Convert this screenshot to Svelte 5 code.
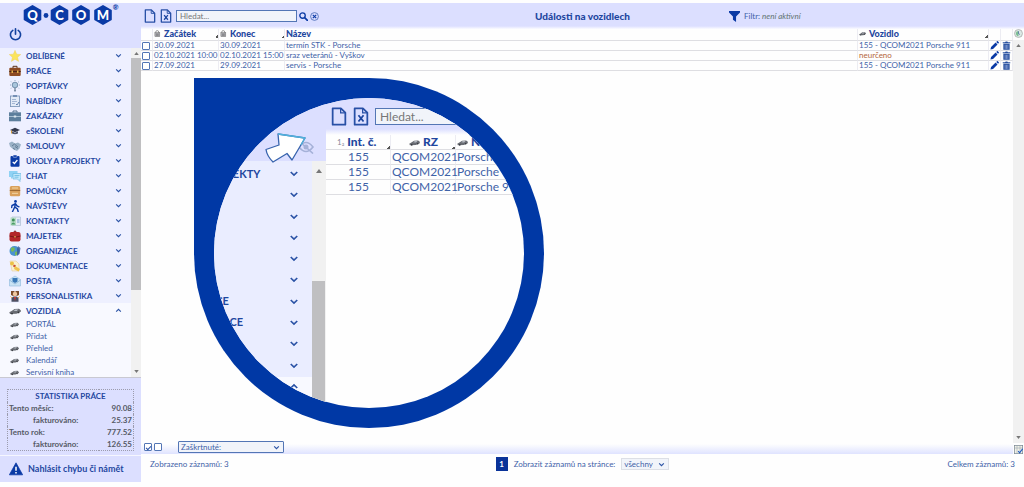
<script lang="ts">
	type Row = { from: string; to: string; name: string; vehicle: string | null };

	const menu = [
		{ icon: 'star', label: 'OBLÍBENÉ' },
		{ icon: 'briefcase', label: 'PRÁCE' },
		{ icon: 'bulb', label: 'POPTÁVKY' },
		{ icon: 'sheet', label: 'NABÍDKY' },
		{ icon: 'case', label: 'ZAKÁZKY' },
		{ icon: 'hat', label: 'eŠKOLENÍ' },
		{ icon: 'hands', label: 'SMLOUVY' },
		{ icon: 'tasks', label: 'ÚKOLY A PROJEKTY' },
		{ icon: 'chat', label: 'CHAT' },
		{ icon: 'box', label: 'POMŮCKY' },
		{ icon: 'walk', label: 'NÁVŠTĚVY' },
		{ icon: 'contact', label: 'KONTAKTY' },
		{ icon: 'bag', label: 'MAJETEK' },
		{ icon: 'globe', label: 'ORGANIZACE' },
		{ icon: 'docs', label: 'DOKUMENTACE' },
		{ icon: 'mail', label: 'POŠTA' },
		{ icon: 'person', label: 'PERSONALISTIKA' }
	];
	const submenu = ['PORTÁL', 'Přidat', 'Přehled', 'Kalendář', 'Servisní kniha'];

	const rows: Row[] = [
		{ from: '30.09.2021', to: '30.09.2021', name: 'termín STK - Porsche', vehicle: '155 - QCOM2021 Porsche 911' },
		{ from: '02.10.2021 10:00', to: '02.10.2021 15:00', name: 'sraz veteránů - Vyškov', vehicle: null },
		{ from: '27.09.2021', to: '29.09.2021', name: 'servis - Porsche', vehicle: '155 - QCOM2021 Porsche 911' }
	];

	const stats = [
		{ label: 'Tento měsíc:', value: '90.08', sub: false },
		{ label: 'fakturováno:', value: '25.37', sub: true },
		{ label: 'Tento rok:', value: '777.52', sub: false },
		{ label: 'fakturováno:', value: '126.55', sub: true }
	];

	// short labels end left of the glass, only their chevrons show
	const lensMenu = ['ÚKOLY A PROJEKTY', '', '', '', '', '', 'ORGANIZACE', 'DOKUMENTACE', '', ''];

	let search = $state('');
	let vehiclesOpen = $state(true);
</script>

{#snippet icon(name: string)}
	<svg class="icon" viewBox="0 0 12 12" aria-hidden="true">
		{#if name === 'star'}
			<path d="M6 .3 7.700 4.200l4.100.3-3.200 2.700 1 4.200L6 9.200l-3.600 2.200 1-4.200L.2 4.500l4.100-.3z" fill="#fbe45c" stroke="#eecb58" stroke-width=".4" />
		{:else if name === 'briefcase'}
			<path d="M4 3V1.300h4V3" fill="none" stroke="#5b3018" />
			<rect x=".3" y="2.800" width="11.400" height="8.200" rx="1" fill="#8c4a22" />
			<path d="M.3 6.500h11.400" stroke="#4b2713" />
			<rect x="2.500" y="5.500" width="1.500" height="2.500" fill="#e3b04c" />
			<rect x="8" y="5.500" width="1.500" height="2.500" fill="#e3b04c" />
		{:else if name === 'bulb'}
			<circle cx="6" cy="5" r="2.800" fill="#a9c6dc" stroke="#5f7f9d" stroke-width=".8" />
			<path d="M5 9h2M5 10.800h2" stroke="#4e6780" />
			<path d="M1 5h1M10 5h1M2 1.500l.8.8M10 1.500l-.8.8M2 8.500l.8-.8M10 8.500l-.8-.8M6 0v1" stroke="#7d9bb8" stroke-width=".8" />
		{:else if name === 'sheet'}
			<rect x="1.500" y="1" width="9" height="10.600" fill="#e3ebf7" stroke="#7590b5" stroke-width=".8" />
			<rect x="4" y="0" width="4" height="2" fill="#7590b5" />
			<path d="M3 4.500h4M3 6.500h5M3 8.500h3" stroke="#8aa1c4" stroke-width=".7" />
			<path d="m7 9 1 1 2-3" fill="none" stroke="#4a6ca0" stroke-width=".8" />
		{:else if name === 'case'}
			<path d="M4 2.500V1h4v1.500" fill="none" stroke="#54738e" />
			<rect x="0" y="2.300" width="12" height="9" fill="#5d7f9c" />
			<path d="M0 6.500h12" stroke="#c0d3df" stroke-width=".8" />
			<rect x="4.800" y="5.500" width="2.400" height="2" fill="#dbe7ee" />
		{:else if name === 'hat'}
			<path d="M1 5 6 2.800 11 5 6 7.300z" fill="#34394c" />
			<path d="M3 6.300v2.200q3 1.600 6 0V6.300L6 7.700z" fill="#505568" />
			<path d="M2.500 5.500v3" stroke="#d29b3e" />
		{:else if name === 'hands'}
			<path d="M0 3 3 1.500l3 2 3-1 3 2-1.500 4L8 11 4.500 9.500 1 6.500z" fill="#9ab1c6" />
			<path d="M3 6 5.500 4 9 7M4 8l2 1.500M6 6.500l3 2" fill="none" stroke="#55708a" stroke-width=".8" />
		{:else if name === 'tasks'}
			<rect x="1.500" y="1" width="9" height="10.700" rx="1" fill="#0a3aa5" />
			<rect x="4" y="0" width="4" height="2.300" rx=".8" fill="#0a3aa5" stroke="#eef1ff" stroke-width=".5" />
			<path d="m3.700 6.800 1.700 1.700 3-3.500" fill="none" stroke="#fff" stroke-width="1.200" />
		{:else if name === 'chat'}
			<path d="M0 1h8.500v6H4L2 9V7H0z" fill="#8fd2f4" />
			<path d="M4 3.500h8V9h-1v2.500L8.500 9H4z" fill="#c1e7fa" stroke="#5bb1dd" stroke-width=".6" />
			<path d="M5.500 5.500h5M5.500 7.200h4" stroke="#5bb1dd" stroke-width=".7" />
		{:else if name === 'box'}
			<rect x=".8" y="1" width="10.400" height="10.300" rx="1.500" fill="#d9a05b" />
			<path d="M.8 5.500h10.400" stroke="#9c6931" />
			<path d="M3 3h6M3 8.300h6" stroke="#f3d6a5" />
		{:else if name === 'walk'}
			<circle cx="6.500" cy="1.400" r="1.400" fill="#0a3aa5" />
			<path d="M6.300 3.500 5.700 7.500M5.700 7 3.500 11.700M5.900 7l2.500 2 .8 2.700M6 4 3 5.500 2.700 7.500M6.700 4l1.300 2 2 .8" fill="none" stroke="#0a3aa5" stroke-width="1.400" stroke-linecap="round" />
		{:else if name === 'contact'}
			<path d="M3 2h8.500v8.500H3z" fill="#e3ecf5" stroke="#a3b6cd" stroke-width=".6" />
			<rect x="1.500" y="2.500" width="5.500" height="8" fill="#b7dcc6" />
			<circle cx="4.300" cy="5" r="1.500" fill="#3f8f59" />
			<path d="M2 9.500q2.300-4 4.600 0z" fill="#4b9d66" />
			<path d="M8 5h2.500M8 7h2.500" stroke="#5987c2" stroke-width=".8" />
		{:else if name === 'bag'}
			<path d="M4 3q2-4 4 0" fill="none" stroke="#7b1216" />
			<rect x=".5" y="2" width="11" height="9.500" rx="2" fill="#b3262a" />
			<path d="M.5 6q5.500 2.500 11 0" fill="none" stroke="#671014" stroke-width=".8" />
			<rect x="5.300" y="6" width="1.400" height="1.600" fill="#dba14c" />
		{:else if name === 'globe'}
			<circle cx="5.500" cy="6" r="5" fill="#4a93cf" />
			<path d="M2 3q3-2 4 1L4 7 2 6zM6 7l3-1-1 4-2 .5z" fill="#77b95a" />
			<path d="M9 1l2.500 2-1 6L8 11V4z" fill="#35599a" opacity=".8" />
		{:else if name === 'docs'}
			<path d="M1 1h6l3 3v7H3z" fill="#f9f0d0" stroke="#e3c48e" stroke-width=".5" />
			<circle cx="3" cy="3.500" r="2" fill="#ecc146" />
			<circle cx="5.500" cy="6" r="1.300" fill="#c84a36" />
			<path d="m6 6 5 3-1.500 2.500L5 9z" fill="#f0c34d" />
		{:else if name === 'mail'}
			<path d="M.5 4.500 6 1l5.500 3.500V11H.5z" fill="#c9e2f4" stroke="#8db9dc" stroke-width=".6" />
			<path d="M3.500 3h5v3.500L6 8 3.500 6.500z" fill="#3977b7" />
			<path d="m.5 5 5.500 4 5.500-4" fill="none" stroke="#7caad3" stroke-width=".7" />
		{:else if name === 'person'}
			<path d="M2 1h3l1 1 1-1h3v4l-2 1H4L2 5z" fill="#7b4c2a" />
			<circle cx="6" cy="4" r="2.200" fill="#f0c8a0" />
			<path d="M2.500 11.700V8l2-1.500h3l2 1.500v3.700z" fill="#4a4f63" />
			<path d="m5 7 1 4 1-4z" fill="#d23b35" />
			<path d="M1.500 6.500 3 8M10.500 6.500 9 8" stroke="#e8b052" />
		{:else if name === 'car'}
			<path d="M.3 7.300 3 5.800 5.500 4l4.500-.3 1.800 1.500v1.500L7.500 8.800 1 9z" fill="#686b72" />
			<path d="M4.600 5.800 6.200 4.600l3-.2-1.500 1.500z" fill="#c3c8d0" />
			<circle cx="3" cy="8.600" r=".9" fill="#33353b" />
			<circle cx="9.500" cy="7.400" r=".9" fill="#33353b" />
		{:else if name === 'lock'}
			<path d="M3 5.500V3.500a2.500 2.500 0 0 1 5 0v2" fill="none" stroke="#777" stroke-width="1.200" />
			<rect x="1.500" y="4.500" width="8.500" height="7" fill="#a9a9ae" stroke="#666" stroke-width=".7" />
			<path d="M3.500 7h4.500M3.500 9h4.500" stroke="#555" stroke-width=".8" />
		{:else if name === 'pencil'}
			<path d="m.6 11.400.8-3.400L7.500 2 10 4.500 4 10.600zM8.300 1.300l1-1a1 1 0 0 1 1.300 0l1.100 1.200a1 1 0 0 1 0 1.300l-1 .9z" fill="#0a3aa5" />
		{:else if name === 'trash'}
			<path d="M1 1.500h3L5 .5h2l1 1h3V3H1zM1.800 3.800h8.400v7.900H1.800z" fill="#274f9f" />
			<path d="M4.200 5v5.500M6 5v5.500M7.800 5v5.500" stroke="#b7c5ea" stroke-width=".7" />
		{:else if name === 'search'}
			<circle cx="4.700" cy="4.700" r="3.600" fill="none" stroke="#0a3aa5" stroke-width="1.800" />
			<path d="m7.500 7.500 3.700 3.700" stroke="#0a3aa5" stroke-width="2.200" stroke-linecap="round" />
		{:else if name === 'clear'}
			<circle cx="6" cy="6" r="5.200" fill="none" stroke="#3e62b0" />
			<path d="m3.700 3.700 4.600 4.600M8.300 3.700 3.700 8.300" stroke="#0a3aa5" stroke-width="1.500" />
		{:else if name === 'filter'}
			<path d="M0 0h12v1.500L7.700 6v6L4.300 9.500V6L0 1.500z" fill="#0a3aa5" />
		{:else if name === 'power'}
			<path d="M3.500 2.200a4.700 4.700 0 1 0 5 0M6 .8v5" fill="none" stroke="#12419f" stroke-width="1.500" stroke-linecap="round" />
		{:else if name === 'warning'}
			<path d="M6 .7 11.700 11H.3z" fill="#0a3aa5" stroke="#0a3aa5" stroke-width=".6" stroke-linejoin="round" />
			<path d="M6 4v3.500M6 8.600v1.300" stroke="#fff" stroke-width="1.300" />
		{:else if name === 'world'}
			<circle cx="6" cy="6" r="5.300" fill="#dce9e5" stroke="#999" stroke-width=".8" />
			<path d="M6 2.500a3.500 3.500 0 0 0 0 7z" fill="#7dbd93" />
			<path d="M6 3v3.300l2 1" fill="none" stroke="#4a6ca0" />
		{:else if name === 'columns'}
			<rect x=".5" y=".5" width="11" height="11" fill="#f1f1e6" stroke="#7d8a96" />
			<path d="M4 1v10M8 1v10M1 4h10" stroke="#9aa9b5" stroke-width=".8" />
			<path d="m5.500 8 2 2.500L11.500 5" fill="none" stroke="#1f5bc0" stroke-width="1.500" />
		{/if}
	</svg>
{/snippet}

{#snippet file(excel: boolean)}
	<svg class="file" viewBox="0 0 12 15" aria-hidden="true">
		<path d="M1 1h6.500L11 4.500V14H1z" fill="none" stroke="#2850a6" stroke-width="1.400" stroke-linejoin="round" />
		<path d="M7.300 1v3.700H11" fill="none" stroke="#2850a6" />
		{#if excel}
			<path d="m4 6.500 4 5M8 6.500l-4 5" stroke="#1c459f" stroke-width="1.400" />
		{/if}
	</svg>
{/snippet}

{#snippet chevron(up: boolean)}
	<svg class="chevron" viewBox="0 0 8 6" aria-hidden="true">
		<path d={up ? 'M1.200 4.300 4 1.700l2.800 2.600' : 'M1.200 1.700 4 4.300l2.800-2.600'} fill="none" stroke="#2a52a5" stroke-width="1.400" />
	</svg>
{/snippet}

{#snippet triangle(up: boolean)}
	<svg class="triangle" viewBox="0 0 6 4" aria-hidden="true">
		<path d={up ? 'M0 4 3 0l3 4z' : 'M0 0h6L3 4z'} />
	</svg>
{/snippet}

<div class="app">
	<aside class="sidebar">
		<div class="brand">
			<svg class="logo" viewBox="0 0 96 22" role="img" aria-label="Q-COM">
				{#each [{ x: 9.5, l: 'Q' }, { x: 36.5, l: 'C' }, { x: 58, l: 'O' }, { x: 80, l: 'M' }] as hex}
					<path transform="translate({hex.x} 11)" d="M0-9 7.800-4.500v9L0 9-7.800 4.500v-9z" fill="#0b3ba6" stroke="#0b3ba6" stroke-width="2" stroke-linejoin="round" />
					<text x={hex.x} y="15.500" text-anchor="middle">{hex.l}</text>
				{/each}
				<circle cx="23" cy="11.500" r="2.400" fill="#0b3ba6" />
				<text class="reg" x="92.500" y="6" text-anchor="middle">®</text>
			</svg>
			<button class="plain power" aria-label="Odhlásit">{@render icon('power')}</button>
		</div>

		<div class="nav-wrap">
			<nav>
				{#each menu as item}
					<button class="plain item">
						{@render icon(item.icon)}
						<span>{item.label}</span>
						{@render chevron(false)}
					</button>
				{/each}
				<button class="plain item open" onclick={() => (vehiclesOpen = !vehiclesOpen)}>
					{@render icon('car')}
					<span>VOZIDLA</span>
					{@render chevron(vehiclesOpen)}
				</button>
				{#if vehiclesOpen}
					<div class="submenu">
						{#each submenu as label}
							<a href="#vozidla">{@render icon('car')}{label}</a>
						{/each}
					</div>
				{/if}
			</nav>
			<div class="scroll">
				{@render triangle(true)}
				<div class="track"><div class="thumb"></div></div>
				{@render triangle(false)}
			</div>
		</div>

		<div class="stats">
			<table>
				<caption>STATISTIKA PRÁCE</caption>
				<tbody>
					{#each stats as s}
						<tr>
							<th class:sub={s.sub} scope="row">{s.label}</th>
							<td>{s.value}</td>
						</tr>
					{/each}
				</tbody>
			</table>
		</div>

		<a class="report" href="#chyba">{@render icon('warning')}Nahlásit chybu či námět</a>
	</aside>

	<main>
		<header>
			<div class="tools">
				<button class="plain new" aria-label="Nový">{@render file(false)}</button>
				<button class="plain new" aria-label="Export">{@render file(true)}</button>
				<input type="text" placeholder="Hledat..." aria-label="Hledat" bind:value={search} />
				<button class="plain find" aria-label="Vyhledat">{@render icon('search')}</button>
				<button class="plain find" aria-label="Zrušit" onclick={() => (search = '')}>{@render icon('clear')}</button>
			</div>
			<h1>Události na vozidlech</h1>
			<button class="plain filter">{@render icon('filter')}<span>Filtr: <em>není aktivní</em></span></button>
		</header>

		<div class="content">
			<div class="grid-area">
				<table class="events">
					<colgroup>
						<col class="c-check" />
						<col class="c-date" />
						<col class="c-date" />
						<col />
						<col class="c-vehicle" />
						<col class="c-action" />
						<col class="c-action" />
					</colgroup>
					<thead>
						<tr>
							<th></th>
							<th><div class="head">{@render icon('lock')}Začátek<i class="sort"></i></div></th>
							<th><div class="head">{@render icon('lock')}Konec<i class="sort"></i></div></th>
							<th><div class="head">Název</div></th>
							<th><div class="head">{@render icon('car')}Vozidlo<i class="sort"></i></div></th>
							<th></th>
							<th></th>
						</tr>
					</thead>
					<tbody>
						{#each rows as row}
							<tr>
								<td><input type="checkbox" aria-label={row.name} /></td>
								<td>{row.from}</td>
								<td>{row.to}</td>
								<td>{row.name}</td>
								<td class:missing={!row.vehicle}>{row.vehicle ?? 'neurčeno'}</td>
								<td><button class="plain" aria-label="Upravit">{@render icon('pencil')}</button></td>
								<td><button class="plain" aria-label="Smazat">{@render icon('trash')}</button></td>
							</tr>
						{/each}
					</tbody>
				</table>

				<div class="bulk">
					<input type="checkbox" aria-label="Označit vše" checked />
					<input type="checkbox" aria-label="Zrušit označení" />
					<div class="select wide">
						<select aria-label="Hromadná akce"><option>Zaškrtnuté:</option></select>
						{@render chevron(false)}
					</div>
				</div>
			</div>
			<div class="rail">
				<button class="plain" aria-label="Obnovit">{@render icon('world')}</button>
				<div class="scroll">
					{@render triangle(true)}
					<div class="track"></div>
					{@render triangle(false)}
				</div>
				<button class="plain" aria-label="Sloupce">{@render icon('columns')}</button>
			</div>
		</div>

		<footer>
			<span>Zobrazeno záznamů: 3</span>
			<div class="pager">
				<button class="plain page">1</button>
				<label for="page-size">Zobrazit záznamů na stránce:</label>
				<div class="select">
					<select id="page-size"><option>všechny</option></select>
					{@render chevron(false)}
				</div>
			</div>
			<span class="total">Celkem záznamů: 3</span>
		</footer>
	</main>

	<!-- magnified view floating over the list -->
	<div class="lens">
		<div class="glass">
			<div class="lens-side">
				<div class="lens-brand">
					<svg viewBox="0 0 16 14" aria-hidden="true">
						<path d="M1 7q7-9 14 0-7 9-14 0z" fill="none" stroke="#a5b1d8" stroke-width="1.600" />
						<circle cx="8" cy="7" r="2.500" fill="#a5b1d8" />
						<path d="m1 1 14 12.500" stroke="#a5b1d8" stroke-width="1.600" />
					</svg>
				</div>
				<div class="lens-nav">
					<div class="lens-menu">
						{#each lensMenu as label}
							<div><span>{label}</span>{@render chevron(false)}</div>
						{/each}
						<div><span></span>{@render chevron(true)}</div>
					</div>
					<div class="scroll">
						{@render triangle(true)}
						<div class="track"><div class="thumb"></div></div>
					</div>
				</div>
			</div>
			<div class="lens-main">
				<div class="lens-bar">
					{@render file(false)}
					{@render file(true)}
					<input type="text" placeholder="Hledat..." aria-label="Hledat vozidlo" />
				</div>
				<table>
					<colgroup>
						<col class="l-num" />
						<col class="l-num" />
						<col />
					</colgroup>
					<thead>
						<tr>
							<th><div class="head num"><small>1₂</small>Int. č.<i class="sort"></i></div></th>
							<th><div class="head plate">{@render icon('car')}RZ<i class="sort"></i></div></th>
							<th><div class="head">{@render icon('car')}Název</div></th>
						</tr>
					</thead>
					<tbody>
						{#each [1, 2, 3] as n (n)}
							<tr>
								<td class="center">155</td>
								<td>QCOM2021</td>
								<td>Porsche 911</td>
							</tr>
						{/each}
					</tbody>
				</table>
			</div>
		</div>
		<svg class="pointer" viewBox="0 0 42 32" aria-hidden="true">
			<path d="M14 2 41 6 28 28l-5-6.500-14 8.500Q3 24 2 17.500L15 13z" fill="#fff" stroke="#3763ad" stroke-width="1.300" stroke-linejoin="round" />
			<path d="M14 2 41 6l-4 7" fill="none" stroke="#50b2dc" stroke-width="1.300" stroke-linejoin="round" />
		</svg>
	</div>
</div>

<style>
	:global(body) {
		margin: 0;
		background: #fefefe;
	}

	.app {
		position: relative;
		box-sizing: border-box;
		display: grid;
		grid-template-columns: 141px 1fr;
		height: 100vh;
		padding: 3px 0 5px;
		overflow: hidden;
		font: 8px/10px 'Century Gothic', Lato, sans-serif;
		color: #3f62a8;
	}

	.plain {
		display: flex;
		align-items: center;
		border: 0;
		padding: 0;
		background: none;
		font: inherit;
		color: inherit;
		cursor: pointer;
	}

	.icon,
	.file,
	.chevron,
	.triangle {
		display: block;
		flex: none;
	}

	.icon {
		width: 12px;
		height: 12px;
	}

	.file {
		width: 12px;
		height: 14px;
	}

	.chevron {
		width: 7px;
		height: 5px;
	}

	.triangle {
		width: 5px;
		height: 3px;
		fill: #777;
	}

	a {
		color: inherit;
		text-decoration: none;
	}

	input,
	select {
		box-sizing: border-box;
		margin: 0;
		border: 1px solid #5376b5;
		border-radius: 0;
		background: #f1f4fa;
		font: inherit;
		color: #3f62a8;
	}

	input::placeholder {
		color: #777;
	}

	input[type='checkbox'] {
		appearance: none;
		display: grid;
		place-items: center;
		width: 8px;
		height: 8px;
		border-radius: 1px;
		background: #fff;
	}

	input[type='checkbox']:checked::after {
		content: '';
		width: 4px;
		height: 2px;
		border: solid #2a52a5;
		border-width: 0 0 1px 1px;
		transform: rotate(-45deg);
	}

	.sidebar {
		display: flex;
		flex-direction: column;
		min-height: 0;
		background: #dcdfff;
	}

	.brand {
		box-sizing: border-box;
		height: 45px;
		padding: 1px 0 0 9px;
	}

	.logo {
		display: block;
		width: 96px;
		height: 22px;
		margin-left: 14px;
	}

	.logo text {
		font: 900 13px 'Century Gothic', Lato, sans-serif;
		fill: #fff;
	}

	.logo .reg {
		font-size: 7px;
		fill: #0b3ba6;
	}

	.power .icon {
		width: 13px;
		height: 13px;
		margin-top: 2px;
	}

	.nav-wrap {
		display: flex;
		flex: 1;
		min-height: 0;
		border-bottom: 1px solid #c9c9d2;
	}

	nav {
		flex: 1;
		overflow: hidden;
		background: #eef0ff;
	}

	.item {
		width: 100%;
		height: 15px;
		padding: 0 9px;
		gap: 5px;
		font-weight: bold;
		color: #1f479f;
	}

	.item span {
		flex: 1;
		text-align: left;
	}

	.open,
	.submenu {
		background: #f8f9ff;
	}

	.submenu a {
		display: flex;
		align-items: center;
		gap: 7px;
		height: 12px;
		padding-left: 10px;
	}

	.submenu .icon {
		width: 9px;
		height: 9px;
	}

	.scroll {
		display: flex;
		flex-direction: column;
		align-items: center;
		width: 10px;
		padding: 4px 0;
		box-sizing: border-box;
		background: #f1f1f1;
	}

	.track {
		flex: 1;
		width: 100%;
		margin: 3px 0;
	}

	.thumb {
		height: 75%;
		background: #bfbfc1;
	}

	.stats {
		padding: 12px 7px 4px;
		border-bottom: 1px solid #f5f6ff;
	}

	.stats table {
		width: 100%;
		border: 1px dotted #9c9cae;
		border-collapse: collapse;
		line-height: 12px;
		color: #555a66;
	}

	.stats caption {
		margin-bottom: -13px;
		font-weight: bold;
		color: #1f479f;
	}

	.stats tbody::before {
		content: '';
		display: block;
		height: 12px;
	}

	.stats th,
	.stats td {
		padding: 0 1px;
		text-align: left;
		font-weight: bold;
	}

	.stats .sub {
		padding-left: 25px;
	}

	.stats td {
		text-align: right;
	}

	.report {
		display: flex;
		align-items: center;
		gap: 5px;
		height: 26px;
		padding-left: 9px;
		font-size: 9px;
		font-weight: bold;
		color: #1f479f;
	}

	.report .icon {
		width: 14px;
		height: 14px;
	}

	main {
		display: flex;
		flex-direction: column;
		min-width: 0;
	}

	header {
		display: grid;
		grid-template-columns: 1fr auto 1fr;
		align-items: center;
		height: 26px;
		background: linear-gradient(#dcdfff 23px, #fbfbff);
	}

	.tools {
		display: flex;
		align-items: center;
		gap: 2px;
		padding-left: 3px;
	}

	.new {
		margin-right: 2px;
	}

	.tools input {
		width: 121px;
		height: 12px;
		padding: 0 3px;
	}

	.find .icon {
		width: 9px;
		height: 9px;
	}

	h1 {
		margin: 0;
		font-size: 10px;
		line-height: 12px;
		font-weight: 900;
		color: #1f479f;
	}

	.filter {
		gap: 4px;
		margin-left: 99px;
	}

	.filter .icon {
		width: 11px;
		height: 11px;
	}

	.filter em {
		color: #61736f;
	}

	.content {
		display: flex;
		flex: 1;
		min-height: 0;
	}

	.grid-area {
		display: flex;
		flex: 1;
		flex-direction: column;
		justify-content: space-between;
		min-width: 0;
	}

	table {
		border-spacing: 0;
	}

	.events {
		width: 100%;
		table-layout: fixed;
	}

	.c-check {
		width: 12px;
	}

	.c-date {
		width: 66px;
	}

	.c-vehicle {
		width: 131px;
	}

	.c-action {
		width: 12px;
	}

	.events th,
	.events td {
		height: 9px;
		padding: 0 0 0 1px;
		border-bottom: 1px solid #dedee2;
		border-right: 1px solid #ececf2;
		line-height: 9px;
		text-align: left;
		white-space: nowrap;
	}

	.events th {
		height: 11px;
		vertical-align: top;
		font-size: 9px;
		font-weight: 900;
		color: #1f479f;
	}

	.head {
		display: flex;
		align-items: center;
		gap: 3px;
	}

	.head .icon {
		width: 7px;
		height: 7px;
	}

	.sort {
		align-self: flex-end;
		width: 3px;
		height: 3px;
		margin-left: auto;
		background: linear-gradient(135deg, transparent 50%, #555 50%);
	}

	.events .missing {
		color: #b4663c;
	}

	.events td .icon {
		width: 9px;
		height: 9px;
	}

	.bulk {
		display: flex;
		align-items: center;
		gap: 2px;
		height: 14px;
		padding-left: 3px;
		background: linear-gradient(#fefefe 4px, #dfe3ff);
	}

	.select {
		display: grid;
		align-items: center;
	}

	.select select,
	.select .chevron {
		grid-area: 1 / 1;
	}

	.select select {
		appearance: none;
		height: 12px;
		padding: 0 15px 0 2px;
		border-color: #dcdfe6;
	}

	.select .chevron {
		justify-self: end;
		margin-right: 4px;
		pointer-events: none;
	}

	.wide {
		width: 106px;
		margin-left: 14px;
	}

	.wide select {
		border-color: #5376b5;
		border-radius: 1px;
	}

	.rail {
		display: flex;
		flex-direction: column;
		align-items: center;
		width: 11px;
		gap: 2px;
	}

	.rail .icon {
		width: 9px;
		height: 9px;
	}

	.rail .scroll {
		flex: 1;
		width: 100%;
	}

	footer {
		display: grid;
		grid-template-columns: 1fr auto 1fr;
		align-items: center;
		height: 20px;
		margin-bottom: 8px;
		padding: 0 9px;
	}

	.pager {
		display: flex;
		align-items: center;
		gap: 6px;
	}

	.page {
		justify-content: center;
		width: 12px;
		height: 14px;
		background: #0a3399;
		color: #fff;
		font-weight: bold;
	}

	.total {
		text-align: right;
	}

	.lens {
		position: absolute;
		left: 194px;
		top: 78px;
		box-sizing: border-box;
		width: 350px;
		height: 350px;
		padding: 20px;
		border-radius: 0 50% 50% 50%;
		background: #0038a5;
	}

	.glass {
		display: flex;
		height: 310px;
		border-radius: 50%;
		overflow: hidden;
		background: #fefefe;
		font-size: 12px;
		line-height: 14px;
	}

	.lens-side {
		display: flex;
		flex: none;
		flex-direction: column;
		width: 199px;
		margin-left: -87px;
	}

	.lens-brand {
		display: flex;
		align-items: flex-end;
		justify-content: flex-end;
		box-sizing: border-box;
		height: 63px;
		padding: 0 12px 7px;
		background: #dcdfff;
	}

	.lens-brand svg {
		width: 16px;
		height: 14px;
	}

	.lens-nav {
		display: flex;
		flex: 1;
	}

	.lens-menu {
		display: flex;
		flex: 1;
		flex-direction: column;
		padding: 2px 0 11px;
		background: linear-gradient(#eaedff 216px, #f8f9ff 216px);
	}

	.lens-menu div {
		display: flex;
		flex: 1;
		align-items: center;
		justify-content: space-between;
		padding: 0 13px 0 31px;
		font-size: 11px;
		font-weight: bold;
		color: #1f479f;
	}

	.lens-menu .chevron {
		width: 10px;
		height: 7px;
	}

	.lens-nav .scroll {
		width: 14px;
		padding: 8px 0 0;
	}

	.lens-nav .triangle {
		width: 8px;
		height: 4px;
	}

	.lens-nav .track {
		display: flex;
		align-items: flex-end;
		margin: 0;
	}

	.lens-nav .thumb {
		width: 13px;
		height: 54%;
	}

	.lens-main {
		flex: 1;
		min-width: 0;
	}

	.lens-bar {
		display: flex;
		align-items: center;
		gap: 6px;
		height: 37px;
		padding-left: 5px;
		background: linear-gradient(#dcdfff 31px, #fefefe);
	}

	.lens-bar .file {
		width: 16px;
		height: 19px;
	}

	.lens-bar input {
		width: 170px;
		height: 17px;
		padding: 0 4px;
	}

	.lens-main table {
		width: 100%;
		table-layout: fixed;
	}

	.l-num {
		width: 65px;
	}

	.lens-main th,
	.lens-main td {
		box-sizing: border-box;
		height: 15px;
		padding: 0 0 0 1px;
		border-bottom: 1px solid #dedee2;
		border-right: 1px solid #ececf2;
		white-space: nowrap;
		text-align: left;
	}

	.lens-main th {
		font-weight: 900;
		color: #1f479f;
	}

	.lens-main .num {
		padding-left: 10px;
	}

	.lens-main .plate {
		padding-left: 17px;
	}

	.lens-main .head .icon {
		width: 11px;
		height: 11px;
	}

	.lens-main small {
		font-size: 8px;
		font-weight: normal;
		color: #889;
	}

	.lens-main .center {
		text-align: center;
	}

	.pointer {
		position: absolute;
		left: 70px;
		top: 54px;
		width: 42px;
		height: 32px;
	}
</style>
